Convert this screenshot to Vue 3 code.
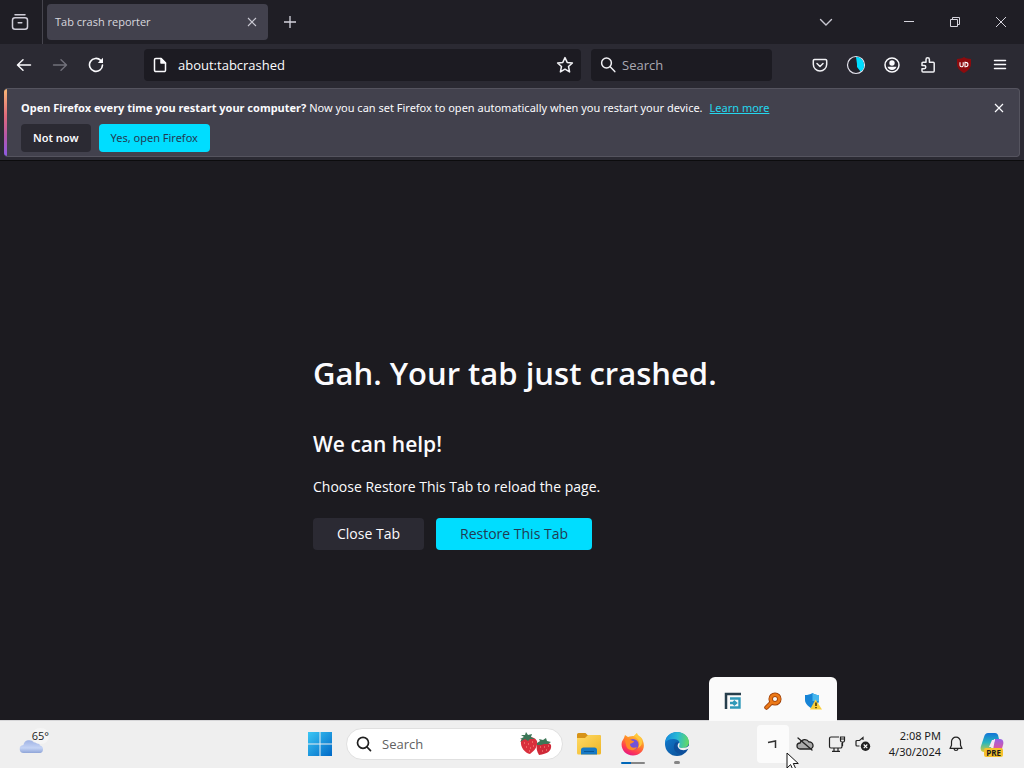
<script setup>
import { ref } from 'vue'

const address = ref('about:tabcrashed')
const webQuery = ref('')
const taskQuery = ref('')
</script>

<template>
  <div class="desktop">
    <header class="tabbar">
      <button class="icon-btn view" aria-label="Firefox View">
        <svg width="18" height="18" viewBox="0 0 18 18" fill="none" stroke="#cfcdd8" stroke-width="1.5" stroke-linecap="round">
          <path d="M4 1.8h10M7.2 9.7h3.6" /><rect x="1.5" y="4.8" width="15" height="11.5" rx="2.5" />
        </svg>
      </button>
      <div class="tab">
        <span class="tab-title">Tab crash reporter</span>
        <button class="icon-btn tab-close" aria-label="Close tab">
          <svg width="10" height="10" viewBox="0 0 10 10" stroke="#c9c8d2" stroke-width="1.1"><path d="M1 1l8 8M9 1l-8 8" /></svg>
        </button>
      </div>
      <button class="icon-btn new-tab" aria-label="New tab">
        <svg width="14" height="14" viewBox="0 0 14 14" stroke="#d5d4dd" stroke-width="1.3"><path d="M7 1v12M1 7h12" /></svg>
      </button>
      <button class="icon-btn all-tabs" aria-label="List all tabs">
        <svg width="14" height="14" viewBox="0 0 14 14" fill="none" stroke="#c9c8d2" stroke-width="1.4" stroke-linecap="round"><path d="M1.5 4.5L7 10l5.500-5.500" /></svg>
      </button>
      <button class="icon-btn win" aria-label="Minimize">
        <svg width="12" height="12" viewBox="0 0 12 12" stroke="#d5d4dd"><path d="M1 5.500h10" /></svg>
      </button>
      <button class="icon-btn win" aria-label="Restore down">
        <svg width="12" height="12" viewBox="0 0 12 12" fill="none" stroke="#d5d4dd"><path d="M1.500 3.500h7v7h-7zM3.500 3.500v-2h7v7h-2" /></svg>
      </button>
      <button class="icon-btn win" aria-label="Close window">
        <svg width="12" height="12" viewBox="0 0 12 12" stroke="#d5d4dd"><path d="M1 1l10 10M11 1L1 11" /></svg>
      </button>
    </header>

    <nav class="toolbar">
      <button class="icon-btn tool" aria-label="Back">
        <svg width="16" height="16" viewBox="0 0 16 16" fill="none" stroke="#fbfbfe" stroke-width="1.5" stroke-linecap="round" stroke-linejoin="round"><path d="M14.500 8H1.800M7 2.700L1.500 8 7 13.300" /></svg>
      </button>
      <button class="icon-btn tool" aria-label="Forward" disabled>
        <svg width="16" height="16" viewBox="0 0 16 16" fill="none" stroke="#72717b" stroke-width="1.4" stroke-linecap="round" stroke-linejoin="round"><path d="M1.500 8h12.700M9 2.700L14.500 8 9 13.300" /></svg>
      </button>
      <button class="icon-btn tool" aria-label="Reload">
        <svg width="16" height="16" viewBox="0 0 16 16" fill="none" stroke="#fbfbfe" stroke-width="1.6" stroke-linecap="round"><path d="M12.700 3.400A6.500 6.500 0 1 0 14.500 8" /><path d="M15 .8v5.200H9.800z" fill="#fbfbfe" stroke="none" /></svg>
      </button>
      <div class="field url">
        <svg width="14" height="16" viewBox="0 0 14 16" fill="none" stroke="#fbfbfe" stroke-width="1.5" stroke-linejoin="round"><path d="M2.800 1.500H8l4.500 4.500v7.200a1.300 1.300 0 0 1-1.300 1.300H2.800a1.300 1.300 0 0 1-1.300-1.300V2.800a1.300 1.300 0 0 1 1.300-1.300z" /><path d="M8 1.500V6h4.500z" fill="#fbfbfe" /></svg>
        <input v-model="address" type="text" aria-label="Address">
        <button class="icon-btn star" aria-label="Bookmark this page">
          <svg width="18" height="18" viewBox="0 0 18 18" fill="none" stroke="#f0f0f4" stroke-width="1.5" stroke-linejoin="round"><path d="M9 1.600l2.200 4.800 5.200.6-3.900 3.500 1.100 5.400L9 13.200l-4.600 2.700 1.100-5.400L1.600 7l5.200-.6z" /></svg>
        </button>
      </div>
      <div class="field find">
        <svg width="16" height="16" viewBox="0 0 16 16" fill="none" stroke="#f0f0f4" stroke-width="1.500" stroke-linecap="round"><circle cx="6.500" cy="6" r="4.900" /><path d="M10.200 9.800l4.600 4.800" /></svg>
        <input v-model="webQuery" type="text" placeholder="Search" aria-label="Search the web">
      </div>
      <div class="extensions">
        <button class="icon-btn tool" aria-label="Save to Pocket">
          <svg width="16" height="16" viewBox="0 0 16 16" fill="none" stroke="#f0f0f4" stroke-width="1.5" stroke-linecap="round" stroke-linejoin="round"><path d="M2.500 2.500h11a1.200 1.200 0 0 1 1.200 1.200V7.300a6.700 6.700 0 0 1-13.400 0V3.700a1.200 1.200 0 0 1 1.200-1.200z" /><path d="M5 6.500l3 3 3-3" /></svg>
        </button>
        <button class="icon-btn tool" aria-label="Containers">
          <svg width="20" height="20" viewBox="0 0 20 20"><circle cx="10" cy="10" r="8.500" fill="#24232c" stroke="#e5e4ee" stroke-width="1.200" /><path d="M10 2a8 8 0 0 1 4.500 14.600L11 12V9z" fill="#00ddff" /></svg>
        </button>
        <button class="icon-btn tool" aria-label="Account">
          <svg width="16" height="16" viewBox="0 0 16 16"><circle cx="8" cy="8" r="7" fill="none" stroke="#fbfbfe" stroke-width="1.500" /><circle cx="8" cy="6" r="2.700" fill="#fbfbfe" /><path d="M3.500 9.700h9c-.4 1.900-2.200 3.300-4.500 3.300s-4.100-1.400-4.500-3.300z" fill="#fbfbfe" /></svg>
        </button>
        <button class="icon-btn tool" aria-label="Extensions">
          <svg width="16" height="18" viewBox="0 0 16 18" fill="none" stroke="#f0f0f4" stroke-width="1.500" stroke-linejoin="round"><path d="M2 8.300V7.300a1 1 0 0 1 1-1h3V3.500a1.700 1.700 0 0 1 3.400 0v2.800h3.800a1 1 0 0 1 1 1v7.700a1 1 0 0 1-1 1H3a1 1 0 0 1-1-1v-2.300h2.200a1.600 1.600 0 0 0 0-3.200H2z" /></svg>
        </button>
        <button class="icon-btn tool" aria-label="uBlock Origin">
          <svg width="16" height="16" viewBox="0 0 16 16"><path d="M8 0c2 1.400 4.500 1.900 7 2v5c0 4-3 7-7 9-4-2-7-5-7-9V2c2.500-.1 5-.6 7-2z" fill="#8c0b0e" /><path d="M4 5.300v2.900a1.600 1.600 0 0 0 3.200 0V5.300M9 5.300v4.400h.8a2.100 2.100 0 0 0 0-4.300z" fill="none" stroke="#fff" stroke-width="1.100" /></svg>
        </button>
        <button class="icon-btn tool" aria-label="Application menu">
          <svg width="14" height="14" viewBox="0 0 14 14" stroke="#fbfbfe" stroke-width="1.500" stroke-linecap="round"><path d="M1.500 2.500h11M1.500 6.500h11M1.500 10.500h11" /></svg>
        </button>
      </div>
    </nav>

    <div class="notice-wrap">
      <section class="notice">
        <div class="notice-body">
          <p><strong>Open Firefox every time you restart your computer?</strong> <span>Now you can set Firefox to open automatically when you restart your device.</span><a href="#">Learn more</a></p>
          <div class="notice-actions">
            <button class="btn small strong">Not now</button>
            <button class="btn small primary">Yes, open Firefox</button>
          </div>
        </div>
        <button class="icon-btn dismiss" aria-label="Dismiss">
          <svg width="10" height="10" viewBox="0 0 10 10" stroke="#fbfbfe" stroke-width="1.200"><path d="M1 1l8 8M9 1l-8 8" /></svg>
        </button>
      </section>
    </div>

    <main class="page">
      <div class="crash">
        <h1>Gah. Your tab just crashed.</h1>
        <h2>We can help!</h2>
        <p>Choose Restore This Tab to reload the page.</p>
        <div class="crash-actions">
          <button class="btn">Close Tab</button>
          <button class="btn primary">Restore This Tab</button>
        </div>
      </div>
    </main>

    <footer class="taskbar">
      <button class="icon-btn weather" aria-label="Weather, 65 degrees">
        <svg width="26" height="18" viewBox="0 0 26 18"><defs><linearGradient id="cl" x2="0" y2="1"><stop stop-color="#9fb2e4" /><stop offset=".6" stop-color="#c5d4f5" /><stop offset="1" stop-color="#8fa5d8" /></linearGradient></defs><path d="M5 17a4 4 0 0 1-.6-8A6 6 0 0 1 15 6.500a5 5 0 0 1 6 3 3.900 3.900 0 0 1 .3 7.500z" fill="url(#cl)" /></svg>
        <span class="degrees">65°</span>
      </button>

      <div class="apps">
        <button class="icon-btn app" aria-label="Start">
          <svg width="24" height="24" viewBox="0 0 24 24"><defs><linearGradient id="wn" x2="1" y2="1"><stop stop-color="#3cc7f5" /><stop offset="1" stop-color="#0068c6" /></linearGradient></defs><path d="M0 0h11.500v11.500H0zM12.500 0H24v11.500H12.500zM0 12.500h11.500V24H0zM12.500 12.500H24V24H12.500z" fill="url(#wn)" /></svg>
        </button>
        <div class="task-search">
          <svg width="16" height="16" viewBox="0 0 16 16" fill="none" stroke="#202020" stroke-width="1.700" stroke-linecap="round"><circle cx="7" cy="6.800" r="5.500" /><path d="M11 11l3.500 3.700" /></svg>
          <input v-model="taskQuery" type="text" placeholder="Search" aria-label="Search Windows">
          <svg width="34" height="24" viewBox="0 0 34 24">
            <path d="M2 9c0-5 13-6 16 0 1 6-3 10-7 13-5-1-10-7-9-13z" fill="#d92f3c" /><path d="M18 13c2-4 12-3 14 0 1 6-4 9-12 10-2-3-3-7-2-10z" fill="#cf2938" />
            <path d="M1 7l4-2-3-2 4 0 1-3 2 3 4-1-1 3 4 2-5 0-2 2-3-2-5 3 2-3zM18 11l3-2-1-2 4 1 3-2 1 3 4 1-3 2-4 0-3 1-4 0z" fill="#3c7657" />
            <path d="M5 11h1M9 12h1M13 10h1M7 15h1M11 16h1M14 14h1M10 19h1M21 15h1M25 15h1M29 14h1M23 19h1M27 18h1" stroke="#ff9b87" />
          </svg>
        </div>
        <button class="icon-btn app" aria-label="File Explorer">
          <svg width="26" height="24" viewBox="0 0 26 24"><defs><linearGradient id="fo" x2="1" y2="1"><stop stop-color="#ffda65" /><stop offset="1" stop-color="#eeb526" /></linearGradient></defs><path d="M1 2.500A1.500 1.500 0 0 1 2.500 1h7l2 2H23a2 2 0 0 1 2 2v6H1z" fill="#d79318" /><path d="M1 6h8l3-3h11.500A1.500 1.500 0 0 1 25 4.500V21a1.500 1.500 0 0 1-1.500 1.500h-21A1.500 1.500 0 0 1 1 21z" fill="url(#fo)" /><path d="M5 22.500V18a2.500 2.500 0 0 1 2.500-2.500h11A2.500 2.500 0 0 1 21 18v4.500z" fill="#1779c4" /><path d="M8 19.500h10" stroke="#075797" /></svg>
        </button>
        <button class="icon-btn app running active" aria-label="Firefox">
          <svg width="24" height="24" viewBox="0 0 24 24"><defs><linearGradient id="ff" x1=".8" y1="0" x2=".3" y2="1"><stop stop-color="#ffe34c" /><stop offset=".4" stop-color="#ff8d27" /><stop offset=".75" stop-color="#ff3d4e" /><stop offset="1" stop-color="#e31488" /></linearGradient></defs><path d="M3 6l1-3 3 2c2-1 4-1 6-1 1-1 2-2 3-3 0 3 5 3 6 8C25 17 20 23.500 12 23.500S-1 16 1 9.500z" fill="url(#ff)" /><circle cx="12" cy="12.500" r="5.500" fill="#7452d8" /><path d="M4 8c4-2 6 1 9 1 0 2-3 2-4 3 0 3 3 5 7 3-2 5-10 4-11-2z" fill="#ff8a25" /><path d="M13 4c5 3 7 7 4 12 5-2 5-8 2-11-1 0-3-2-3-4z" fill="#ffc83d" /></svg>
        </button>
        <button class="icon-btn app running" aria-label="Edge">
          <svg width="26" height="26" viewBox="0 0 26 26"><defs><linearGradient id="e1" y1=".4" x2="1" y2=".5"><stop stop-color="#168bdc" /><stop offset=".5" stop-color="#28b9d5" /><stop offset="1" stop-color="#65da64" /></linearGradient><linearGradient id="e2" x2="1" y2="1"><stop stop-color="#127fd3" /><stop offset="1" stop-color="#0b498f" /></linearGradient></defs><circle cx="13" cy="13" r="12" fill="url(#e2)" /><path d="M1 12C2-3 24-2 25 11c0 4-3 6-7 6-3 0-4-1-3-3 2-4-2-6-6-6-4 0-7 2-8 4z" fill="url(#e1)" /><path d="M11 12c-3 5 0 11 7 11 3-1 5-3 6-5-3 2-7 2-9-1-1-2-1-3 0-5-1-1-3-1-4 0z" fill="#0d4f9b" /><path d="M15.500 11.500c-2 1-2.500 3.500-1 5.500 2 2.500 6.500 3 9.700.800l1.800-1.800v-3c-1.500 3-4.500 4-8 4-2.500 0-3.500-1.300-2.700-2.700.5-.900.500-2 .2-2.800z" fill="#f0f0f0" /></svg>
        </button>
      </div>

      <div class="tray">
        <button class="icon-btn chevron" aria-label="Hidden icons">
          <svg width="12" height="12" viewBox="0 0 12 12" fill="none" stroke="#333" stroke-width="1.500"><path d="M1 4.500l7.500-1.500v7" /></svg>
        </button>
        <button class="icon-btn tray-icon" aria-label="OneDrive">
          <svg width="18" height="14" viewBox="0 0 18 14" fill="#aaa" stroke="#222" stroke-width="1.300" stroke-linecap="round"><path d="M4 12a3 3 0 0 1 0-6 5 5 0 0 1 9-1 3.500 3.500 0 0 1 1 7z" /><path d="M2 1l14 12" /></svg>
        </button>
        <button class="icon-btn tray-icon" aria-label="Network">
          <svg width="18" height="18" viewBox="0 0 18 18" fill="none" stroke="#222" stroke-width="1.200"><path d="M11 2H3a1.500 1.500 0 0 0-1.500 1.500v8A1.500 1.500 0 0 0 3 13h9.500a1.500 1.500 0 0 0 1.500-1.500V8M6 13v3M10 13v3M4 16.400h8M14.500 7v4M12.500 2h4v3.500a1.500 1.500 0 0 1-1.500 1.500h-1a1.500 1.500 0 0 1-1.500-1.500zM12.500 4h4" /></svg>
        </button>
        <button class="icon-btn tray-icon volume" aria-label="Volume">
          <svg width="16" height="16" viewBox="0 0 16 16"><path d="M8 4V1.500L4.500 4.500H2A1 1 0 0 0 1 5.500V9a1 1 0 0 0 1 1h2.500" fill="none" stroke="#222" stroke-width="1.200" /><circle cx="10.500" cy="10.300" r="4.700" fill="#222" /><path d="M8.700 8.500l3.600 3.600M12.300 8.500l-3.600 3.600" stroke="#fff" stroke-width="1.100" /></svg>
        </button>
        <button class="icon-btn clock"><span>2:08 PM</span><span>4/30/2024</span></button>
        <button class="icon-btn bell" aria-label="Notifications">
          <svg width="14" height="16" viewBox="0 0 14 16" fill="none" stroke="#222" stroke-width="1.200" stroke-linejoin="round"><path d="M7 1.200a4.500 4.500 0 0 0-4.500 4.500v3.500L1 12.400h12l-1.500-3.200V5.700A4.500 4.500 0 0 0 7 1.200zM5 12.600c.3 2.500 3.700 2.500 4 0" /></svg>
        </button>
        <button class="icon-btn copilot" aria-label="Copilot preview">
          <svg width="24" height="24" viewBox="0 0 24 24"><defs><linearGradient id="ca" x2="0" y2="1"><stop stop-color="#1375d8" /><stop offset=".5" stop-color="#28b5be" /><stop offset="1" stop-color="#d6cc37" /></linearGradient><linearGradient id="cb" x2="0" y2="1"><stop stop-color="#9661e8" /><stop offset=".6" stop-color="#e25699" /><stop offset="1" stop-color="#ff9f54" /></linearGradient></defs><path d="M8 1h7c2 0 3 1 3.500 4l.5 2h-5l-3 9c-1 3-2 4-4 4H4c-3 0-4-3-3-6l3-9c1-3 2-4 4-4z" fill="url(#ca)" /><path d="M15 7h5c3 0 4 3 3 6l-2 7c-1 3-3 4-5 4H9c3 0 3-3 4-6z" fill="url(#cb)" /><path d="M12 8h3l-3 7H9z" fill="#f6e6f6" /></svg>
          <span class="pre">PRE</span>
        </button>
      </div>
      <div class="hidden-icons">
        <svg width="18" height="18" viewBox="0 0 18 18" fill="none"><path d="M2 17V2h15" stroke="#263e4c" stroke-width="2.500" /><path d="M6 6.500h9.500v9H6M6 11h5.500M9.500 8.800l2.500 2.200-2.500 2.200" stroke="#3099b9" stroke-width="2.400" /></svg>
        <svg width="18" height="18" viewBox="0 0 18 18" fill="none"><path d="M7.500 10.500L2.500 15.500" stroke="#983c08" stroke-width="4.500" stroke-linecap="round" /><circle cx="11" cy="7" r="4.300" stroke="#983c08" stroke-width="4.500" /><path d="M7.500 10.500L2.500 15.500" stroke="#eb7918" stroke-width="2.800" stroke-linecap="round" /><circle cx="11" cy="7" r="4.300" stroke="#eb7918" stroke-width="3" /></svg>
        <svg width="18" height="18" viewBox="0 0 18 18"><path d="M8.500 1c2 1.500 4 2 6.500 2v5c0 4-3 7-6.500 9C5 15 1 12 1 8V3c3 0 5-.5 7.500-2z" fill="#1684d6" /><path d="M8.500 1c2 1.500 4 2 6.500 2v6H8.500z" fill="#45b6ee" /><path d="M11.500 7.500L18 17.500H6z" fill="#f9cf3a" /><path d="M12 10.500v3.500M12 15v1.300" stroke="#382d08" stroke-width="1.500" /></svg>
      </div>
    </footer>
    <svg class="pointer" width="14" height="20" viewBox="0 0 14 20"><path d="M1 1v15l3.600-3.400L7.500 19l2.800-1.200-3-6.300h5z" fill="#fff" stroke="#111" /></svg>
  </div>
</template>

<style>
body { margin: 0; background: #1c1b22; }
</style>

<style scoped>
* { box-sizing: border-box; }
.desktop { position: relative; display: flex; flex-direction: column; min-height: 100vh; overflow: hidden; background: #1c1b20; color: #fbfbfe; font: 11px/16px "Open Sans", "Noto Sans", sans-serif; }
button, input { font: inherit; color: inherit; }
svg { display: block; flex: none; }
.icon-btn { display: flex; flex: none; align-items: center; justify-content: center; padding: 0; border: 0; background: none; }

.tabbar { display: flex; align-items: center; height: 44px; background: #1f1e25; }
.view { width: 43px; height: 44px; padding-right: 3px; border-right: 1px solid #46454e; }
.tab { display: flex; align-items: center; justify-content: space-between; width: 221px; height: 36px; margin-left: 4px; padding: 0 6px 0 8px; border-radius: 4px; background: #42414d; }
.tab-title { color: #d8d7df; }
.tab-close { width: 20px; height: 20px; }
.new-tab { width: 44px; height: 36px; }
.all-tabs { width: 36px; height: 36px; margin-left: auto; margin-right: 42px; }
.win { width: 46px; height: 44px; }

.toolbar { display: flex; align-items: center; height: 41px; padding: 0 6px; background: #2b2a33; }
.tool { width: 36px; height: 36px; }
.field { display: flex; align-items: center; height: 32px; border-radius: 4px; background: #1c1b22; font-size: 13px; }
.field input { flex: 1; min-width: 0; padding: 0; border: 0; outline: 0; background: transparent; }
.field input::placeholder { color: #aaa9b2; opacity: 1; }
.url { flex: 1; min-width: 0; margin-left: 30px; padding: 0 4px 0 9px; gap: 11px; }
.star { width: 24px; height: 24px; }
.find { width: 181px; margin: 0 30px 0 10px; padding: 0 9px; gap: 6px; }
.extensions { display: flex; }

.notice-wrap { padding: 3px 4px; background: #2b2a33; border-bottom: 1px solid #0c0c0d; font-family: "Noto Sans", "Open Sans", sans-serif; }
.notice { position: relative; display: flex; align-items: flex-start; justify-content: space-between; min-height: 68px; padding: 11px 10px 4px 17px; border: 1px solid #55545f; border-left: 0; border-radius: 4px; background: #42414d; overflow: hidden; }
.notice::before { content: ""; position: absolute; inset: 0 auto 0 0; width: 3px; background: linear-gradient(#f7b775, #e06a7b 40%, #b657a8 70%, #8d5ae5); }
.notice p { margin: 0 0 8px; }
.notice a { margin-left: 7px; color: #24d7ee; }
.notice-actions { display: flex; gap: 8px; }
.dismiss { width: 20px; height: 16px; }
.btn { height: 32px; padding: 0 24px; border: 0; border-radius: 4px; background: #2b2a33; color: #fbfbfe; }
.btn.small { height: 28px; padding: 0 12px; }
.btn.strong { font-weight: 600; }
.btn.primary { background: #00ddff; color: #203b53; }

.page { display: flex; flex: 1; align-items: center; justify-content: center; padding: 20px 24px 0; }
.crash { width: 398px; font-size: 14px; line-height: 20px; }
.crash h1 { margin: 0 0 35px; font-size: 31px; line-height: 44px; font-weight: 600; white-space: nowrap; }
.crash h2 { margin: 0 0 19px; font-size: 21px; line-height: 28px; font-weight: 600; }
.crash p { margin: 0 0 21px; }
.crash-actions { display: flex; gap: 12px; }

.taskbar { position: relative; display: grid; grid-template-columns: 1fr auto 1fr; align-items: center; height: 48px; padding-bottom: 1px; background: #efefef; border-top: 1px solid #d6d6d8; color: #1b1b1b; }
.weather { position: relative; justify-self: start; width: 36px; height: 40px; margin-left: 18px; }
.weather svg { margin: 2px 8px 0 0; }
.degrees { position: absolute; top: 4px; right: 5px; border-radius: 8px; background: #f5f5f5; }
.apps { display: flex; align-items: center; padding-right: 27px; }
.app { position: relative; width: 44px; height: 44px; }
.app.running::after { content: ""; position: absolute; bottom: 2px; width: 6px; height: 3px; border-radius: 2px; background: #858585; }
.app.active::after { width: 24px; height: 2px; background: linear-gradient(90deg, #0067b8 40%, #858585 40%); }
.task-search { display: flex; align-items: center; gap: 10px; width: 217px; height: 32px; margin: 0 4px; padding: 0 9px; border: 1px solid #e0e0e0; border-radius: 16px; background: #fff; font-size: 13px; }
.task-search input { flex: 1; min-width: 0; padding: 0; border: 0; outline: 0; background: transparent; }
.task-search input::placeholder { color: #616161; opacity: 1; }
.tray { display: flex; justify-self: end; align-items: center; padding-right: 18px; }
.chevron { width: 32px; height: 38px; border-radius: 4px; background: #fbfbfb; }
.tray-icon { width: 32px; height: 38px; }
.volume { width: 20px; }
.clock { flex-direction: column; align-items: flex-end; width: 68px; font-family: "Noto Sans", "Open Sans", sans-serif; }
.bell { width: 30px; height: 38px; }
.copilot { position: relative; width: 28px; height: 38px; margin-left: 7px; }
.pre { position: absolute; right: 3px; bottom: 6px; padding: 0 2px; border-radius: 2px; background: #f6c12c; font-size: 8px; line-height: 9px; font-weight: 700; }
.hidden-icons { position: absolute; right: 187px; bottom: 100%; display: flex; align-items: center; justify-content: space-between; width: 128px; height: 44px; padding: 4px 15px 0; border-radius: 6px 6px 0 0; background: #fafafa; }
.pointer { position: absolute; right: 224px; bottom: -4px; }
</style>
